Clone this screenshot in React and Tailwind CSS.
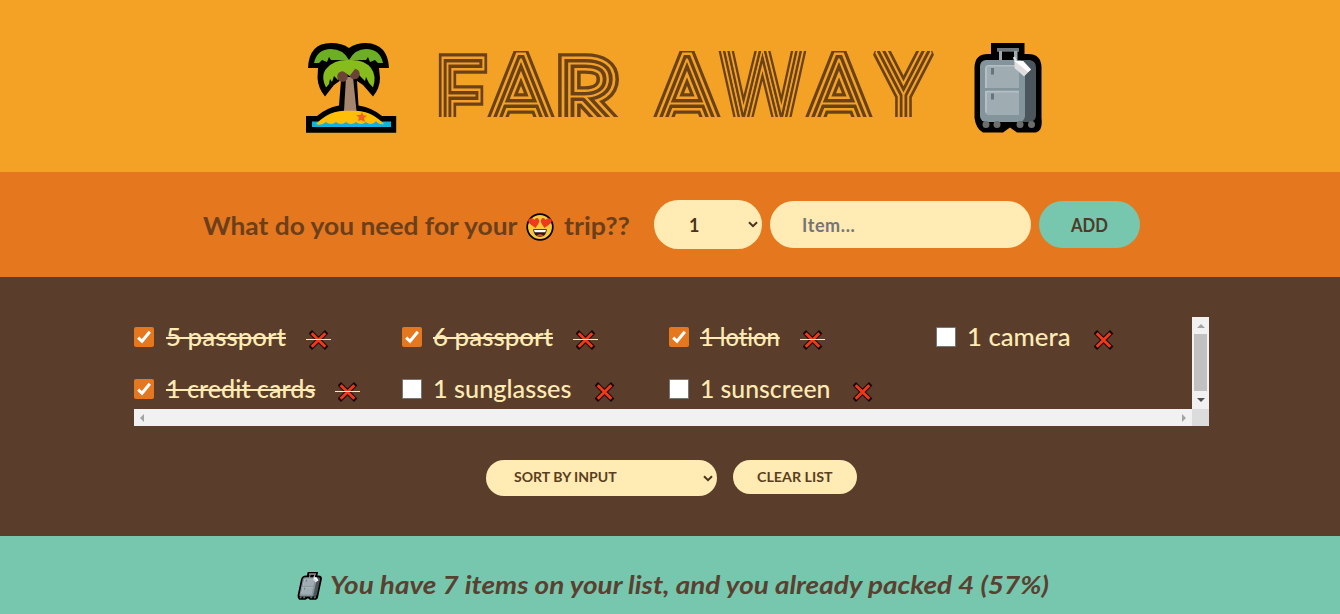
import { useLayoutEffect, useRef } from "react";

const DISPLAY = "Lato, 'Liberation Sans', sans-serif";

/* Widens a line of text so that it fills an exact width. */
function Line({ children, width, className = "", textClass = "" }) {
  const ref = useRef(null);
  useLayoutEffect(() => {
    const el = ref.current;
    el.style.transform = `scaleX(${width / el.offsetWidth})`;
  }, [width]);
  return (
    <span className={`inline-block whitespace-pre text-left ${className}`} style={{ width }}>
      <span ref={ref} className={`inline-block origin-left [font-variant-ligatures:none] ${textClass}`}>
        {children}
      </span>
    </span>
  );
}

function PalmIcon({ className }) {
  return (
    <svg viewBox="0 0 110 106" className={className} aria-hidden="true">
      <path
        d="M10 98.700V82H21Q30 74 43 71.500L45 46 38 51 29 62.500Q22 54 21.500 44L22 34H12Q13 9 35 9Q46 9 53 14Q60 9 70 9Q92 10 93 34H83L84 44Q84 54 77 62.500L67 51 61 47 62.500 71.500Q77 74 86 82H100.200V98.700Z"
        fill="#000"
      />
      <path d="M18 29Q21 15 35 15Q47 15 53 26H35L33 23 31 28 26 26 23 29Z" fill="#6cae24" />
      <path d="M87 29Q84 15 70 15Q59 15 53 26H70L72 23 74 28 79 26 82 29Z" fill="#6cae24" />
      <path d="M50 43H57L60.500 77H48Z" fill="#a5856b" />
      <path
        d="M30 53.500Q24 41 31 34Q39 25 53 26Q68 25 75 34Q81 42 77 53.500L73 49 70 43 69 47 64 42 61 38 53 38 44 40 42 46 38 42 36 48 34 45 33 50Z"
        fill="#86bc1c"
      />
      <circle cx="46.500" cy="42.500" r="5.300" fill="#6b4437" />
      <circle cx="58.500" cy="40" r="5.200" fill="#6b4437" />
      <path d="M46 36L53 33 59 35 53.500 42Z" fill="#86bc1c" />
      <path d="M16 87.500H95V93H16Z" fill="#12b1e4" />
      <path
        d="M20 90Q23 86.500 30 82Q38 77 48 76.700H60Q70 77 78 82Q85 86.500 88 90Q84 91 80 87.500Q75 92 70 88Q65 92 60 88Q55 92 50 88Q45 92 40 88Q35 92 30 88Q25 92 20 90Z"
        fill="#ffbf08"
      />
      <path d="M66 78L67.500 81.500 71 81.500 68 84 69 88 65 86 62 87 63 83.500 60 81 64.500 81Z" fill="#f26321" />
    </svg>
  );
}

function SuitcaseIcon({ className }) {
  return (
    <svg viewBox="10 9 68 90" className={className} aria-hidden="true">
      <path
        d="M27 9H60.500V20H64Q77 20 77.500 33V84Q79 97 72 98.500H53L46 93.500 39 98.500H19Q12 95 10.500 84V33Q11 20 24 20H27Z"
        fill="#000"
      />
      <path d="M33 14H55V17.500H53.500V28H50V17.500H38V28H35V17.500H33Z" fill="#a1a8ac" />
      <path d="M33 14H55V17H33Z" fill="#72797e" />
      <path d="M52 26H66Q72 27 72 34V81Q72 87 66 88H52Z" fill="#4b565c" />
      <rect x="16" y="26" width="45" height="62" rx="6" fill="#83949a" />
      <path d="M21 35Q21 31 25 31H55V81H25Q21 81 21 77Z" fill="#9fadb3" />
      <path d="M21 35Q21 31 25 31H55V32.500H23V54H21ZM21 57H55V58.500H23V79Q21 79 21 75Z" fill="#b4bfc3" />
      <path d="M21 54H55V56.500H21Z" fill="#83949a" />
      <path d="M27 34H30V40.500H27ZM27 59.500H30V65.500H27Z" fill="#65757c" />
      <path d="M50 23L52.500 29" stroke="#ddd" strokeWidth="2.500" />
      <path d="M50.500 27H59L67 35.500 60 42.500 50.500 34Z" fill="#dedede" />
      <path d="M50.500 27H59L67 35.500 64 38 53 29Z" fill="#fff" />
      <g fill="#6d6d6d">
        <circle cx="22" cy="90.500" r="3.500" />
        <circle cx="33" cy="90.500" r="3.500" />
        <circle cx="56" cy="90.500" r="3.500" />
        <circle cx="67.500" cy="90.500" r="3.500" />
      </g>
    </svg>
  );
}

function HeartEyes({ className }) {
  return (
    <svg viewBox="0 0 28 28" className={className} aria-hidden="true">
      <circle cx="14" cy="14" r="12.800" fill="#f9c83c" stroke="#000" strokeWidth="1.700" />
      <path d="M9.500 15L3.500 10.500Q1 7 3.500 5.700Q6.500 4.500 8.500 7Q10.300 3.800 12.500 5.800Q14 7.500 12.500 10.500Z" fill="#ee3a1d" />
      <path d="M18.500 15L15.500 10.500Q14 7.500 15.500 5.800Q17.700 3.800 19.500 7Q21.500 4.500 24.500 5.700Q27 7 24.500 10.500Z" fill="#ee3a1d" />
      <path d="M7.200 16.300H20.800Q20.500 23.600 14 23.700Q7.500 23.600 7.200 16.300Z" fill="#2b1512" />
      <path d="M8 17H20L19.300 19.300H8.700Z" fill="#fff" />
      <path d="M10.500 22.500Q14 19.300 17.500 22.500Q14 24.200 10.500 22.500Z" fill="#e8402c" />
    </svg>
  );
}

function Cross() {
  return (
    <svg viewBox="0 0 20 20" className="h-5 w-5" aria-hidden="true">
      <path d="M3 3.500L16 16.500M16 3.500L3 16.500" stroke="#160604" strokeWidth="4.800" strokeLinecap="square" />
      <path d="M2.700 3.200L16.300 16.800M16.300 3.200L2.700 16.800" stroke="#f03a17" strokeWidth="2.900" />
    </svg>
  );
}

function Chevron({ className }) {
  return (
    <svg viewBox="0 0 10 7" className={className} aria-hidden="true">
      <path d="M1 1.200L5 5.200 9 1.200" fill="none" stroke="#4a3120" strokeWidth="2" />
    </svg>
  );
}

/* Four parallel rails: stacked strokes of one thin skeleton. */
function Title() {
  return (
    <svg viewBox="0 0 500 66" className="h-[66px] w-[500px] overflow-hidden">
      <g stroke="#6b4218" strokeWidth="19.500" fill="none" strokeLinejoin="miter" strokeMiterlimit="2">
        <text id="title" y="77" fontFamily={DISPLAY} fontWeight="100">
          <tspan x="3" fontSize="93" textLength="44" lengthAdjust="spacingAndGlyphs">F</tspan>
          <tspan x="56" fontSize="98" textLength="60" lengthAdjust="spacingAndGlyphs">A</tspan>
          <tspan x="122" fontSize="93" textLength="60" lengthAdjust="spacingAndGlyphs">R</tspan>{" "}
          <tspan x="222" fontSize="98" textLength="60" lengthAdjust="spacingAndGlyphs">A</tspan>
          <tspan x="288" fontSize="112" textLength="79" lengthAdjust="spacingAndGlyphs">W</tspan>
          <tspan x="374" fontSize="98" textLength="60" lengthAdjust="spacingAndGlyphs">A</tspan>
          <tspan x="443" fontSize="112" textLength="51" lengthAdjust="spacingAndGlyphs">Y</tspan>
        </text>
      </g>
      <g strokeMiterlimit="2">
        <use href="#title" stroke="#f4a226" strokeWidth="13" fill="none" />
        <use href="#title" stroke="#6b4218" strokeWidth="8" fill="none" />
        <use href="#title" stroke="#f4a226" strokeWidth="1" fill="#f4a226" />
      </g>
    </svg>
  );
}

const items = [
  { text: "5 passport", width: 120, packed: true },
  { text: "6 passport", width: 120, packed: true },
  { text: "1 lotion", width: 80, packed: true },
  { text: "1 camera", width: 104, packed: false },
  { text: "1 credit cards", width: 149, packed: true },
  { text: "1 sunglasses", width: 139, packed: false },
  { text: "1 sunscreen", width: 130, packed: false },
];

function Item({ item, first }) {
  return (
    <li className="flex h-[52px] items-start">
      <span
        className={`mt-[10px] flex h-5 w-5 items-center justify-center ${
          item.packed ? "rounded-[2px] bg-[#e5771f]" : "rounded-[1px] border border-[#767676] bg-white"
        }`}
      >
        {item.packed && (
          <svg viewBox="0 0 20 20" className="h-5 w-5">
            <path d="M4.200 10.600L8 14.300 15.800 4.800" fill="none" stroke="#fff" strokeWidth="3" />
          </svg>
        )}
      </span>
      <Line
        width={item.width}
        className={`h-10 text-2xl/10 font-medium ${first ? "ml-3" : "ml-[11px]"}`}
        textClass={item.packed ? "line-through decoration-[1.5px]" : ""}
      >
        {item.text}
      </Line>
      <span className="relative ml-5 mt-[13px] flex w-[25px] justify-center">
        <Cross />
        {item.packed && <span className="absolute left-0 top-[9px] h-px w-[25px] bg-[#ffebb3]" />}
      </span>
    </li>
  );
}

export default function App() {
  return (
    <div className="flex h-[614px] w-[1340px] flex-col overflow-hidden bg-[#5a3e2b] font-['Lato','Liberation_Sans',sans-serif] text-[#5a3e2b]">
      <header className="flex h-[172px] shrink-0 items-start bg-[#f4a226] pl-[296px] pt-[34px]">
        <PalmIcon className="h-[106px] w-[110px]" />
        <h1 className="ml-[29px] mt-[17px]">
          <Title />
        </h1>
        <SuitcaseIcon className="ml-[39px] mt-[9px] h-[90px] w-[68px]" />
      </header>

      <form className="flex h-[105px] shrink-0 items-center bg-[#e5771f] pl-[203px]">
        <h3 className="flex w-[451px] items-center pt-[3px] text-2xl font-bold text-[#6b3f1b]">
          <Line width={314}>What do you need for your</Line>
          <HeartEyes className="ml-[9px] mt-px h-7 w-7" />
          <Line width={66} className="ml-[10px]">trip??</Line>
        </h3>
        <div className="flex h-[49px] w-[108px] items-center justify-between rounded-full bg-[#ffebb3] pl-[35px] pr-1 text-lg font-bold text-[#4a3120]">
          <span>1</span>
          <Chevron className="h-[7px] w-[10px]" />
        </div>
        <input
          className="ml-2 h-[47px] w-[261px] rounded-full bg-[#ffebb3] px-8 text-lg font-bold tracking-[0.6px] placeholder:text-[#757575]"
          placeholder="Item..."
        />
        <button type="button" className="ml-2 h-[47px] w-[101px] rounded-full bg-[#76c7ad] text-lg font-bold text-[#4f3a2a]">
          <Line width={37}>ADD</Line>
        </button>
      </form>

      <main className="flex h-[259px] shrink-0 flex-col items-center pl-[3px] pt-10 text-[#ffebb3]">
        <div className="flex h-[109px] w-[1075px] flex-col">
          <div className="flex h-[92px]">
            <ul className="grid h-[92px] w-[1058px] grid-cols-[268px_267px_267px_256px] content-start overflow-hidden">
              {items.map((item, i) => (
                <Item key={item.text} item={item} first={i % 4 === 0} />
              ))}
            </ul>
            <div className="flex w-[17px] flex-col items-center bg-[#f1f1f1]">
              <span className="flex h-[17px] items-center">
                <svg viewBox="0 0 8 4" className="h-1 w-2"><path d="M0 4L4 0 8 4Z" fill="#a3a3a3" /></svg>
              </span>
              <span className="h-[57px] w-[13px] bg-[#c1c1c1]" />
              <span className="flex h-[18px] items-center">
                <svg viewBox="0 0 8 4" className="h-1 w-2"><path d="M0 0L4 4 8 0Z" fill="#505050" /></svg>
              </span>
            </div>
          </div>
          <div className="flex h-[17px]">
            <div className="flex w-[1058px] items-center justify-between bg-[#f1f1f1] px-[6px]">
              <svg viewBox="0 0 4 8" className="h-2 w-1"><path d="M4 0L0 4 4 8Z" fill="#a3a3a3" /></svg>
              <svg viewBox="0 0 4 8" className="h-2 w-1"><path d="M0 0L4 4 0 8Z" fill="#a3a3a3" /></svg>
            </div>
            <span className="w-[17px] bg-[#dcdcdc]" />
          </div>
        </div>
        <div className="mt-[34px] flex items-start gap-4 text-sm font-bold text-[#5a3e20]">
          <div className="flex h-9 w-[231px] items-center justify-between rounded-full bg-[#ffebb3] pl-7 pr-1">
            <Line width={103} className="text-[13.5px]">SORT BY INPUT</Line>
            <Chevron className="h-[7px] w-[10px]" />
          </div>
          <button type="button" className="h-[34px] w-[124px] rounded-full bg-[#ffebb3] pt-px text-[13.5px]">
            <Line width={76}>CLEAR LIST</Line>
          </button>
        </div>
      </main>

      <footer className="flex h-[78px] shrink-0 items-start bg-[#76c7ad] pl-[298px] pt-[33px] text-2xl/8 font-bold italic text-[#5a4030]">
        <SuitcaseIcon className="mt-[3px] h-7 w-6 -skew-x-12" />
        <Line width={719} className="ml-[8px]">
          You have 7 items on your list, and you already packed 4 (57%)
        </Line>
      </footer>
    </div>
  );
}
